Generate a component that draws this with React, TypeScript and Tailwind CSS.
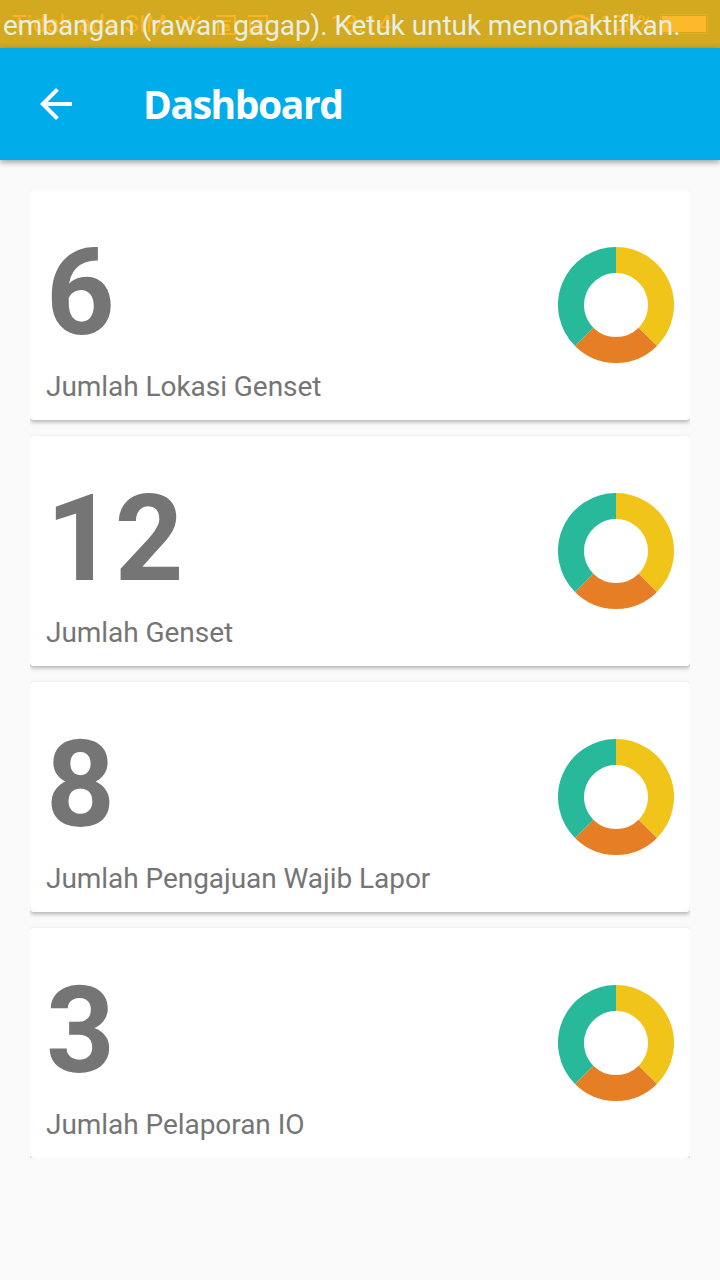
interface Stat {
  value: number;
  label: string;
}

const STATS: Stat[] = [
  { value: 6, label: 'Jumlah Lokasi Genset' },
  { value: 12, label: 'Jumlah Genset' },
  { value: 8, label: 'Jumlah Pengajuan Wajib Lapor' },
  { value: 3, label: 'Jumlah Pelaporan IO' },
];

function SimIcon() {
  return (
    <svg className="h-[21px] w-[21px]" viewBox="0 0 21 21" fill="none" stroke="currentColor" strokeWidth="2">
      <path d="M1 2h19v18H3V6M7 7h9M14 11H8v2h6v3H7" />
    </svg>
  );
}

// System icons show through faintly behind the ticker text
function StatusBar() {
  return (
    <div className="relative h-12 overflow-hidden bg-[#d2a91f] font-[Roboto,sans-serif]">
      <div className="flex h-12 items-center pl-3 pr-[12px] text-[24px] leading-none text-[#fcb424]">
        <span className="w-[166px] whitespace-nowrap tracking-[0.2px]">Tidak ada SIM</span>
        <svg className="h-[20px] w-[24px]" viewBox="0 0 24 20" fill="none" stroke="currentColor" strokeWidth="2">
          <path d="M2 2l6 6 4-5 4 5 6-6M5 9l5 5-5 5M19 9l-5 5 5 5" />
        </svg>
        <span className="ml-[13px] flex gap-[11px]">
          <SimIcon />
          <SimIcon />
        </span>
        <span className="ml-[62px] tracking-[0.4px]">18:14</span>
        <svg className="ml-auto h-[20px] w-[28px]" viewBox="0 0 28 20" fill="none" stroke="currentColor" strokeWidth="3">
          <path d="M2 7Q14-3 26 7M7 12q7-6 14 0" />
          <circle cx="14" cy="16" r="1" />
        </svg>
        <span className="ml-2 text-[22px]">100%</span>
        <span className="ml-[7px] h-[20px] w-[48px] border border-[#e6ae20] bg-[#fdb929] shadow-[inset_0_0_0_1px_#d2a91f]" />
      </div>
      <p className="absolute left-[3px] top-[9px] whitespace-nowrap text-[28px] leading-[33px] tracking-[-0.08px] text-[#e6efe4]">
        embangan (rawan gagap). Ketuk untuk menonaktifkan.
      </p>
    </div>
  );
}

function AppBar() {
  return (
    <header className="relative flex h-28 items-center bg-[#00ace9] pl-8 text-white shadow-[0_2px_6px_rgba(0,0,0,0.4)]">
      <svg className="size-12" viewBox="0 0 24 24" fill="currentColor">
        <path d="M20 11H7.83l5.59-5.59L12 4l-8 8 8 8 1.41-1.41L7.83 13H20v-2z" />
      </svg>
      <h1 className="mb-[2px] ml-[63px] font-['Open_Sans',sans-serif] text-[39px] font-bold leading-none tracking-[-1.4px]">
        Dashboard
      </h1>
    </header>
  );
}

function DonutChart() {
  return (
    <svg className="mt-[57px] size-[116px]" viewBox="0 0 116 116" fill="none" strokeWidth="26">
      <path d="M58 13A45 45 0 0 1 89.82 89.82" stroke="#f0c419" />
      <path d="M89.82 89.82A45 45 0 0 1 26.18 89.82" stroke="#e57e25" />
      <path d="M26.18 89.82A45 45 0 0 1 58 13" stroke="#27b99a" />
    </svg>
  );
}

function StatCard({ value, label }: Stat) {
  return (
    <div className="flex h-[230px] justify-between rounded-[4px] bg-white px-4 text-[#757575] shadow-[0_2px_4px_rgba(0,0,0,0.3)]">
      <div className="pt-[33px]">
        <div className="text-[120px] font-bold leading-[141px]">{value}</div>
        <div className="mt-[6px] text-[28px] leading-[33px] tracking-[-0.05px]">{label}</div>
      </div>
      <DonutChart />
    </div>
  );
}

export default function App() {
  return (
    <div className="min-h-screen bg-[#fafafa] font-[Roboto,sans-serif]">
      <StatusBar />
      <AppBar />
      {/* The list clips card shadows at its own edges */}
      <main className="mx-[30px] mt-[30px] flex flex-col gap-4 overflow-hidden">
        {STATS.map((stat) => (
          <StatCard key={stat.label} {...stat} />
        ))}
      </main>
    </div>
  );
}
